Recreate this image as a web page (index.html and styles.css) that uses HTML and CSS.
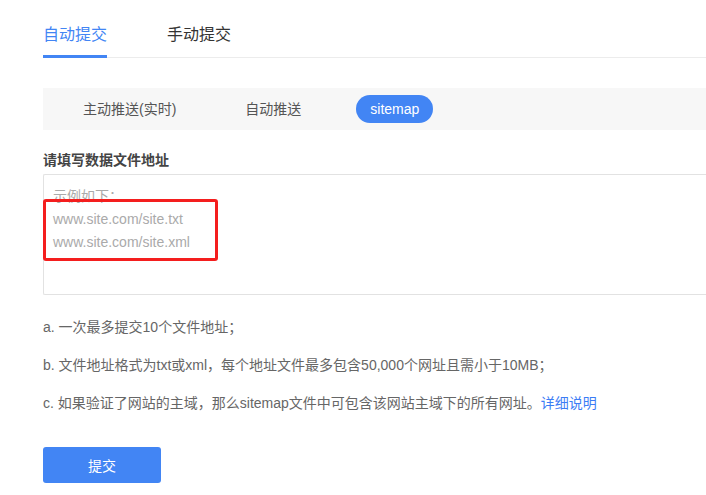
FILE: index.html
```html
<!DOCTYPE html>
<html lang="zh-CN">

<head>
    <meta charset="UTF-8">
    <meta name="viewport" content="width=device-width, initial-scale=1.0">
    <title>链接提交</title>
    <link rel="stylesheet" href="styles.css">
</head>

<body>
    <div class="page">
        <div class="tabs">
            <a class="tab active" href="#">自动提交</a>
            <a class="tab" href="#">手动提交</a>
        </div>

        <div class="subnav">
            <span class="subnav-item">主动推送(实时)</span>
            <span class="subnav-item">自动推送</span>
            <span class="subnav-item current">sitemap</span>
        </div>

        <label class="field-label" for="siteUrls">请填写数据文件地址</label>
        <div class="field">
            <textarea id="siteUrls" placeholder="示例如下：&#10;www.site.com/site.txt&#10;www.site.com/site.xml"></textarea>
            <div class="highlight"></div>
        </div>

        <ul class="notes">
            <li>a. 一次最多提交10个文件地址；</li>
            <li>b. 文件地址格式为txt或xml，每个地址文件最多包含50,000个网址且需小于10MB；</li>
            <li>c. 如果验证了网站的主域，那么sitemap文件中可包含该网站主域下的所有网址。<a href="#">详细说明</a></li>
        </ul>

        <button class="submit-btn">提交</button>
    </div>
</body>

</html>
```

FILE: styles.css
```css
:root {
    --blue: #4285f4;
    --text: #666;
    --border: #e2e2e2;
}

body {
    margin: 0;
    font-family: "Liberation Sans", "Noto Sans CJK SC", sans-serif;
    font-size: 14px;
    color: var(--text);
    background: #fff;
}

.page {
    box-sizing: border-box;
    width: 100%;
    padding-left: 43px;
}

.tabs {
    display: flex;
    gap: 60px;
    padding-top: 24px;
    border-bottom: 1px solid #ececec;
}

.tab {
    display: block;
    font-size: 16px;
    line-height: 22px;
    padding-bottom: 9px;
    margin-bottom: -1px;
    border-bottom: 3px solid transparent;
    color: #333;
    text-decoration: none;
}

.tab.active {
    color: var(--blue);
    border-bottom-color: var(--blue);
}

.subnav {
    display: flex;
    align-items: center;
    gap: 41px;
    height: 42px;
    margin-top: 30px;
    padding-left: 26px;
    background: #f7f7f7;
}

.subnav-item {
    display: block;
    height: 28px;
    line-height: 28px;
    padding: 0 14px;
    border-radius: 14px;
    color: #555;
}

.subnav-item.current {
    background: var(--blue);
    color: #fff;
}

.field-label {
    display: block;
    margin-top: 20px;
    line-height: 20px;
    font-weight: bold;
    color: #444;
}

.field {
    position: relative;
    margin-top: 4px;
}

textarea {
    display: block;
    box-sizing: border-box;
    width: 100%;
    height: 121px;
    padding: 10px 9px 8px;
    border: 1px solid var(--border);
    border-right: none;
    border-radius: 2px 0 0 2px;
    font-family: inherit;
    font-size: 14px;
    line-height: 23px;
    resize: none;
    outline: none;
}

textarea::placeholder {
    color: #aaa;
}

/* red marker around the example urls */
.highlight {
    position: absolute;
    left: 0;
    top: 25px;
    width: 175px;
    height: 62px;
    box-sizing: border-box;
    border: 3px solid #f41e1e;
    border-radius: 3px;
}

.notes {
    list-style: none;
    margin: 22px 0 0;
    padding: 0;
}

.notes li {
    line-height: 20px;
    margin-bottom: 18px;
}

.notes li:last-child {
    margin-bottom: 0;
}

.notes a {
    color: #3b7cf5;
    text-decoration: none;
}

.submit-btn {
    display: block;
    width: 118px;
    height: 36px;
    margin-top: 34px;
    border: none;
    border-radius: 3px;
    background: var(--blue);
    color: #fff;
    font-family: inherit;
    font-size: 14px;
    cursor: pointer;
}
```
